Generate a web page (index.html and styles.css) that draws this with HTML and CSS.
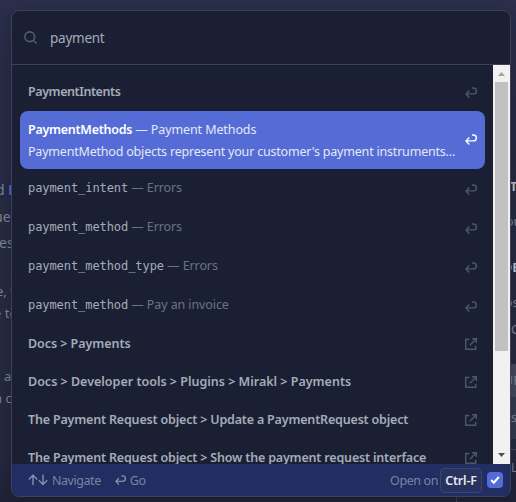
FILE: index.html
```html
<!DOCTYPE html>
<html lang="en">
<head>
<meta charset="utf-8">
<title>Search</title>
<link rel="stylesheet" href="styles.css">
</head>
<body>
<svg class="defs" width="0" height="0">
  <symbol id="enter" viewBox="0 0 12 12"><path d="M6.900 1H8.400a2.900 2.900 0 0 1 0 5.900H1.200M4.300 3.600 1 6.900l3.300 3.600" /></symbol>
  <symbol id="external" viewBox="0 0 12 12"><path d="M4.400 1.500H.7v9.800h10V7.700M7 .7h4.300V5M11.100.9 4.800 7.200" /></symbol>
</svg>
<div class="page">
  <div class="left">
    <p class="l1">d <b>P</b></p><p class="l2"><i>u</i>es</p><p class="l3">es</p><p class="l4">e, v</p><p class="l5"><em>e</em> to</p><p class="l6">a</p><p class="l7">n c</p>
  </div>
  <div class="right">
    <p class="r1">T</p><p class="r2">ou</p><p class="r3">DE</p><p class="r4">os</p><p class="r5">C</p>
    <div class="code"><p class="r6">UR</p><p class="r7">s</p></div>
    <p class="r8">L</p>
  </div>
  <div class="tick"></div>
</div>
<main class="modal">
  <header class="search">
    <svg class="glass" viewBox="0 0 12 12"><circle cx="5.3" cy="5.3" r="4.5"/><path d="m8.600 8.600 3 3"/></svg>
    <span>payment</span>
  </header>
  <div class="body">
    <div class="list">
      <div class="row"><b class="w1">PaymentIntents</b><svg class="icon"><use href="#enter"/></svg></div>
      <div class="row selected">
        <div class="copy"><div><b class="w2">PaymentMethods</b><span class="w3"> — Payment Methods</span></div><div class="w4">PaymentMethod objects represent your customer's payment instruments...</div></div>
        <svg class="icon"><use href="#enter"/></svg>
      </div>
      <div class="row tall"><div><code>payment_intent</code><span class="muted"> — Errors</span></div><svg class="icon"><use href="#enter"/></svg></div>
      <div class="row tall"><div><code>payment_method</code><span class="muted"> — Errors</span></div><svg class="icon"><use href="#enter"/></svg></div>
      <div class="row tall"><div><code>payment_method_type</code><span class="muted"> — Errors</span></div><svg class="icon"><use href="#enter"/></svg></div>
      <div class="row tall"><div><code>payment_method</code><span class="muted"> — Pay an invoice</span></div><svg class="icon"><use href="#enter"/></svg></div>
      <div class="row"><b class="w5">Docs &gt; Payments</b><svg class="icon ext"><use href="#external"/></svg></div>
      <div class="row"><b class="w6">Docs &gt; Developer tools &gt; Plugins &gt; Mirakl &gt; Payments</b><svg class="icon ext"><use href="#external"/></svg></div>
      <div class="row"><b class="w7">The Payment Request object &gt; Update a PaymentRequest object</b><svg class="icon ext"><use href="#external"/></svg></div>
      <div class="row"><b class="w8">The Payment Request object &gt; Show the payment request interface</b><svg class="icon ext"><use href="#external"/></svg></div>
    </div>
    <div class="scrollbar">
      <svg class="arrow up" viewBox="0 0 17 17"><path d="M5 11h7L8.500 7z"/></svg>
      <div class="thumb"></div>
      <svg class="arrow down" viewBox="0 0 17 17"><path d="M5 6h7l-3.500 4z"/></svg>
    </div>
  </div>
  <footer class="footer">
    <svg class="arrows" viewBox="0 0 20 12"><path d="M5 11V1.500M.8 5.400 5 1.200l4.200 4.200M15 .5V10.500M10.800 6.300 15 10.500l4.200-4.200"/></svg>
    <span class="nav">Navigate</span>
    <svg class="icon go" viewBox="0 0 12 12"><use href="#enter"/></svg>
    <span class="gotext">Go</span>
    <span class="open">Open on</span>
    <kbd>Ctrl-F</kbd>
    <span class="check"><svg viewBox="0 0 16 16"><path d="m4.200 8 2.600 2.700 5-5.700"/></svg></span>
  </footer>
</main>
</body>
</html>
```

FILE: styles.css
```css
* { box-sizing: border-box; }
body { margin: 0; width: 516px; height: 502px; overflow: hidden; position: relative; background: #282c45; color: #a3acb9; font: 12.5px/20px "Noto Sans", "Open Sans", sans-serif; }
p { margin: 0; }
.defs { position: absolute; }
.page { display: flex; justify-content: space-between; height: 502px; background: linear-gradient(#2b2f4b, #282c45 12%, #25293f 90%, #202337); }
.left { width: 12px; padding-top: 180px; overflow: hidden; white-space: nowrap; color: #7e859a; font-size: 14px; }
.left p { height: 20px; }
.left b { color: #5470d8; }
.left i { color: #8b8366; font-style: normal; }
.left em { color: #8c5260; font-style: normal; }
.left .l1 { margin-left: -4px; }
.left .l2 { margin: 7px 0 0 -6px; }
.left .l3 { margin-top: 6px; margin-left: -1px; }
.left .l4 { margin-top: 28px; margin-left: -4px; font-size: 13px; }
.left .l5 { margin-top: 2px; margin-left: -6px; font-size: 13px; }
.left .l6 { margin-top: 43px; margin-left: 4px; font-size: 13px; }
.left .l7 { margin-top: 2px; margin-left: -6px; font-size: 13px; }
.right { width: 5px; padding-top: 177px; overflow: hidden; white-space: nowrap; color: #7e859a; }
.right p { height: 20px; }
.r1, .r3 { font-weight: 700; color: #c0c4ce; }
.right .r1 { margin-left: -1px; }
.right .r2 { margin: 15px 0 0 -5px; }
.right .r3 { margin: 26px 0 0 -8px; }
.right .r4 { margin: 15px 0 0 -6px; }
.right .r5 { margin-top: 7px; }
.code { margin-top: 24px; height: 75px; background: linear-gradient(#454a5f 33px, #363b50 33px); }
.code .r6 { padding-top: 7px; margin-left: -7px; }
.code .r7 { padding-top: 24px; }
.right .r8 { margin-top: 10px; padding-top: 8px; height: 44px; border-top: 1px solid #42465a; }
.tick { position: absolute; left: 456px; top: 496px; width: 1px; height: 6px; background: #42465a; }

.modal { position: absolute; left: 11px; top: 10px; width: 500px; height: 487px; display: flex; flex-direction: column; border: 1px solid #3c4257; border-radius: 8px; overflow: hidden; background: #1b1f34; box-shadow: 0 5px 15px rgba(10, 13, 29, .3); }
.search { height: 54px; flex: none; display: flex; align-items: center; border-bottom: 1px solid #3c4257; padding: 0 12px; font-size: 13.5px; letter-spacing: -.25px; }
.glass { width: 13px; height: 13px; margin-right: 13px; fill: none; stroke: #555c72; stroke-width: 1.4; }
.body { flex: 1; min-height: 0; display: flex; }
.list { flex: 1; min-width: 0; padding: 8px; overflow: hidden; }
.row { height: 38px; padding: 0 8px; border-radius: 8px; display: flex; align-items: center; justify-content: space-between; white-space: nowrap; }
.row b { font-weight: 600; }
.row.tall { height: 39px; padding-bottom: 1px; }
.row.selected { height: 58px; background: #556cd6; color: #e3e8f5; }
.selected b { color: #fff; }
.copy { line-height: 22px; padding-top: 2px; }
.w1 { letter-spacing: -.43px; }
.w2 { letter-spacing: -.27px; }
.w3 { letter-spacing: -.1px; }
.w4 { letter-spacing: -.2px; }
.w5 { letter-spacing: -.05px; }
.w7, .w8 { letter-spacing: -.18px; }
.icon { width: 12px; height: 12px; fill: none; stroke: #4f566b; stroke-width: 1.4; flex: none; }
.row .icon { position: relative; top: 1px; }
.row.tall .icon { top: 2px; }
.row .icon.ext { top: 0; }
.row.selected .icon { top: 0; stroke: #fff; }
code { font: 12px "DejaVu Sans Mono", monospace; letter-spacing: -.07px; }
.muted { color: #697386; letter-spacing: -.1px; }
.scrollbar { width: 17px; flex: none; background: #f1f1f1; display: flex; flex-direction: column; align-items: center; }
.arrow { width: 17px; height: 17px; flex: none; }
.up { fill: #a3a3a3; }
.down { fill: #505050; margin-top: auto; }
.thumb { width: 13px; height: 269px; background: #c1c1c1; }
.footer { height: 32px; flex: none; display: flex; align-items: center; padding: 0 7px 0 16px; background: #212d63; color: #7a849e; }
.footer > span:not(.check) { padding-top: 2px; }
.arrows { width: 20px; height: 12px; margin-right: 4px; fill: none; stroke: #8792a8; stroke-width: 1.4; }
.nav { margin-right: 14px; letter-spacing: -.45px; }
.icon.go { width: 11px; height: 11px; stroke: #8792a8; margin-right: 4px; }
.gotext { letter-spacing: -.4px; }
.open { margin-left: auto; margin-right: 2px; letter-spacing: -.4px; }
kbd { width: 42px; height: 25px; display: flex; align-items: center; justify-content: center; border: 1px solid #3c4570; border-radius: 4px; background: #29325f; color: #e3e8ee; font: 600 12.5px "Noto Sans", sans-serif; letter-spacing: -.2px; margin-right: 5px; }
.check { width: 16px; height: 16px; border-radius: 4px; background: #556cd6; }
.check svg { display: block; fill: none; stroke: #fff; stroke-width: 2; }
```
